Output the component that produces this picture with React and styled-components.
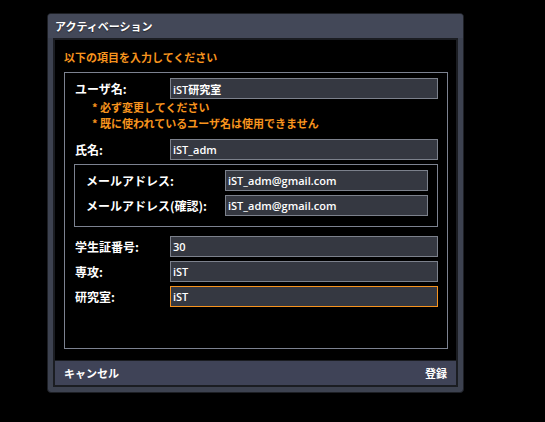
import React from 'react';
import styled, { createGlobalStyle } from 'styled-components';

const GlobalStyle = createGlobalStyle`
  html, body {
    margin: 0;
    padding: 0;
    background: #000;
  }
  body {
    font-family: "Liberation Sans", "Noto Sans CJK JP", sans-serif;
    width: 545px;
    height: 422px;
    overflow: hidden;
  }
`;

const Window = styled.div`
  box-sizing: border-box;
  margin: 13px 0 0 47px;
  width: 417px;
  height: 380px;
  background: #3d4250;
  border: 1px solid #1d1f24;
  border-radius: 4px;
  padding: 0 5px 5px 5px;
  display: flex;
  flex-direction: column;
  box-shadow: 0 1px 2px rgba(0, 0, 0, 0.6);
`;

const TitleBar = styled.div`
  height: 24px;
  display: flex;
  align-items: center;
  background: #434858;
  margin: 0 -5px;
  padding: 0 7px;
  border-radius: 3px 3px 0 0;
  color: #fff;
  font-family: "Noto Sans CJK JP", sans-serif;
  font-size: 11px;
  font-weight: 700;
  text-shadow: 0 1px 1px rgba(0, 0, 0, 0.5);
`;

const Inner = styled.div`
  flex: 1;
  display: flex;
  flex-direction: column;
  background: #000;
  border: 2px solid #1b1d22;
`;

const Body = styled.div`
  flex: 1;
  padding: 9px 8px 0 9px;
`;

const Heading = styled.div`
  color: #f7941e;
  font-family: "Noto Sans CJK JP", sans-serif;
  font-size: 11px;
  line-height: 16px;
  font-weight: 700;
`;

const Fieldset = styled.div`
  box-sizing: border-box;
  margin-top: 7px;
  height: 277px;
  border: 1px solid #7c8290;
  padding: 5px 9px 0 9px;
`;

const Row = styled.div`
  display: flex;
  align-items: center;
  margin-top: ${p => p.$gap || 0}px;
`;

const Label = styled.div`
  width: ${p => p.$w}px;
  flex-shrink: 0;
  padding-left: 1px;
  color: #fff;
  font-family: "Noto Sans CJK JP", sans-serif;
  font-size: 12px;
  font-weight: 700;
  white-space: nowrap;
`;

const Input = styled.div`
  box-sizing: border-box;
  flex: 1;
  height: 21px;
  display: flex;
  align-items: center;
  padding: 0 2px;
  background: #353841;
  border: 1px solid ${p => (p.$focus ? '#f7931e' : '#7c818c')};
  color: #fff;
  font-family: "Open Sans", "Noto Sans CJK JP", sans-serif;
  font-size: 11px;
  font-weight: 600;
`;

const Notes = styled.div`
  padding-left: 18px;
  color: #f7941e;
  font-family: "Noto Sans CJK JP", sans-serif;
  font-size: 11px;
  line-height: 16px;
  font-weight: 700;
`;

const EmailBox = styled.div`
  margin-top: 4px;
  border: 1px solid #7c8290;
  padding: 5px 9px 10px 10px;
`;

const BottomBar = styled.div`
  height: 24px;
  display: flex;
  align-items: center;
  justify-content: space-between;
  padding: 0 9px;
  background: #3f4357;
  border-top: 1px solid #1b1d22;
`;

const BarButton = styled.div`
  color: #fff;
  font-family: "Noto Sans CJK JP", sans-serif;
  font-size: 11px;
  font-weight: 700;
`;

export default function App() {
  return (
    <>
      <GlobalStyle />
      <Window>
        <TitleBar>アクティベーション</TitleBar>
        <Inner>
          <Body>
            <Heading>以下の項目を入力してください</Heading>
            <Fieldset>
              <Row>
                <Label $w={95}>ユーザ名:</Label>
                <Input>iST研究室</Input>
              </Row>
              <Notes>
                <div>* 必ず変更してください</div>
                <div>* 既に使われているユーザ名は使用できません</div>
              </Notes>
              <Row $gap={8}>
                <Label $w={95}>氏名:</Label>
                <Input>iST_adm</Input>
              </Row>
              <EmailBox>
                <Row>
                  <Label $w={139}>メールアドレス:</Label>
                  <Input>iST_adm@gmail.com</Input>
                </Row>
                <Row $gap={4}>
                  <Label $w={139}>メールアドレス(確認):</Label>
                  <Input>iST_adm@gmail.com</Input>
                </Row>
              </EmailBox>
              <Row $gap={9}>
                <Label $w={95}>学生証番号:</Label>
                <Input>30</Input>
              </Row>
              <Row $gap={4}>
                <Label $w={95}>専攻:</Label>
                <Input>iST</Input>
              </Row>
              <Row $gap={4}>
                <Label $w={95}>研究室:</Label>
                <Input $focus>iST</Input>
              </Row>
            </Fieldset>
          </Body>
          <BottomBar>
            <BarButton>キャンセル</BarButton>
            <BarButton>登録</BarButton>
          </BottomBar>
        </Inner>
      </Window>
    </>
  );
}
